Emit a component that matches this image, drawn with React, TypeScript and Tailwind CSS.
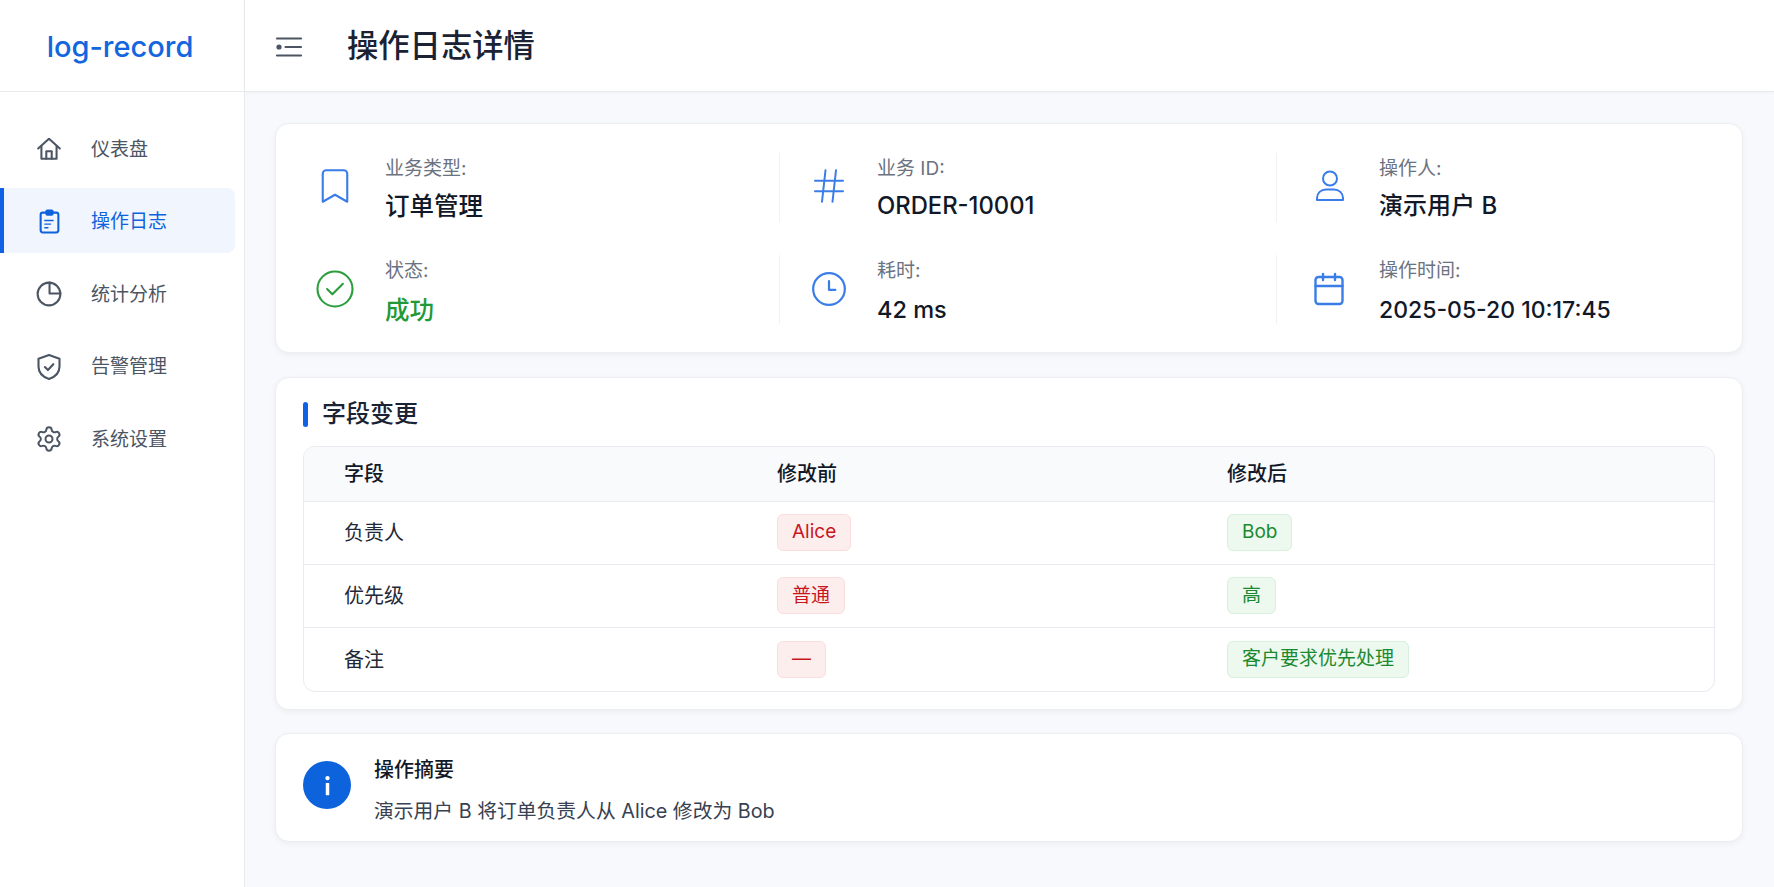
import { Bookmark, Hash, Calendar, Settings } from 'lucide-react';
import type { ReactNode } from 'react';

const FONT = "font-['Inter','Noto_Sans_CJK_SC',sans-serif]";

type IconProps = { className: string };

function HomeIcon({ className }: IconProps) {
  return (
    <svg className={className} viewBox="0 0 24 24" fill="none" stroke="currentColor" strokeWidth={1.9} strokeLinecap="round" strokeLinejoin="round">
      <path d="M2 11.500 12 2.500l10 9" />
      <path d="M5 9.500V21h14V9.500" />
      <path d="M9.500 21v-7h5v7" />
    </svg>
  );
}

function LogIcon({ className }: IconProps) {
  return (
    <svg className={className} viewBox="0 0 24 24" fill="none" stroke="currentColor" strokeWidth={2} strokeLinecap="round" strokeLinejoin="round">
      <rect x="3.500" y="3.500" width="17" height="19" rx="2" />
      <rect x="9" y="1.500" width="6" height="4" rx="1" fill="currentColor" />
      <path d="M7.500 11h8M7.500 14.500h5.500M7.500 18h3" strokeWidth={1.3} />
    </svg>
  );
}

function PieIcon({ className }: IconProps) {
  return (
    <svg className={className} viewBox="0 0 24 24" fill="none" stroke="currentColor" strokeWidth={1.9} strokeLinecap="round" strokeLinejoin="round">
      <circle cx="12" cy="12" r="10.500" />
      <path d="M12.500 1.500v10h10" />
    </svg>
  );
}

function ShieldIcon({ className }: IconProps) {
  return (
    <svg className={className} viewBox="0 0 24 24" fill="none" stroke="currentColor" strokeWidth={1.8} strokeLinecap="round" strokeLinejoin="round">
      <path d="M12 1.800 21 5v6.500c0 5.200-3.600 8.900-9 10.700-5.400-1.800-9-5.500-9-10.700V5z" />
      <path d="m8.500 12 2.600 2.600 4.600-5" />
    </svg>
  );
}

function MenuIcon() {
  return (
    <svg className="h-[22px] w-[28px] text-[#4b5563]" viewBox="0 0 28 22" fill="none" stroke="currentColor" strokeWidth={2.2} strokeLinecap="round">
      <path d="M2 2.500h24" />
      <path d="M10.500 11H26" />
      <path d="M2 19.500h24" />
      <circle cx="4" cy="11" r="2.600" fill="currentColor" stroke="none" />
    </svg>
  );
}

function UserIcon({ className }: IconProps) {
  return (
    <svg className={className} viewBox="0 0 30 32" fill="none" stroke="currentColor" strokeWidth={2} strokeLinecap="round" strokeLinejoin="round">
      <circle cx="15" cy="8.500" r="7" />
      <path d="M2 30v-2c0-5 4-8.500 9-8.500h8c5 0 9 3.500 9 8.500v2z" />
    </svg>
  );
}

function CheckIcon({ className }: IconProps) {
  return (
    <svg className={className} viewBox="0 0 24 24" fill="none" stroke="currentColor" strokeWidth={1.2} strokeLinecap="round" strokeLinejoin="round">
      <circle cx="12" cy="12" r="10" />
      <path d="m7.500 12 3 3 6-6" />
    </svg>
  );
}

function ClockIcon({ className }: IconProps) {
  return (
    <svg className={className} viewBox="0 0 24 24" fill="none" stroke="currentColor" strokeWidth={1.4} strokeLinecap="round" strokeLinejoin="round">
      <circle cx="12" cy="12" r="10" />
      <path d="M12 7v5.500h4" />
    </svg>
  );
}

function NavItem({ icon, label, active }: { icon: ReactNode; label: string; active?: boolean }) {
  return (
    <div
      className={`flex h-[65px] w-[235px] items-center gap-[28px] rounded-r-lg border-l-4 pt-[3px] pl-[31px] text-[19px] ${
        active ? 'border-[#0f62e6] bg-[#f0f5fe] text-[#0f62dc]' : 'border-transparent text-[#4b5563]'
      }`}
    >
      <div className="flex h-[28px] w-[28px] shrink-0 items-center justify-center">{icon}</div>
      <span className="pt-[2px]">{label}</span>
    </div>
  );
}

function InfoCell({
  icon,
  label,
  value,
  textClass,
  iconClass,
  valueClass,
  divider,
}: {
  icon: ReactNode;
  label: string;
  value: string;
  textClass: string;
  iconClass: string;
  valueClass?: string;
  divider?: boolean;
}) {
  return (
    <div className={`flex h-[69px] items-center ${divider ? 'border-l border-[#f1f2f5]' : ''}`}>
      <div className={`flex shrink-0 justify-center ${iconClass}`}>{icon}</div>
      <div className={`flex flex-col ${textClass}`}>
        <div className="text-[19px] leading-[26px] text-[#6b7280]">{label}</div>
        <div className={`leading-[34px] font-medium ${valueClass ?? 'text-[24px] text-[#111827]'}`}>{value}</div>
      </div>
    </div>
  );
}

function Badge({ tone, children }: { tone: 'red' | 'green'; children: ReactNode }) {
  return (
    <span
      className={`inline-flex h-[37px] items-center rounded-md border px-[14px] text-[19px] ${
        tone === 'red' ? 'border-[#fbdcdc] bg-[#fdeeee] text-[#c8161d]' : 'border-[#d8f0dc] bg-[#edf8ef] text-[#1a8a2e]'
      }`}
    >
      {children}
    </span>
  );
}

const rows = [
  { field: '负责人', before: 'Alice', after: 'Bob' },
  { field: '优先级', before: '普通', after: '高' },
  { field: '备注', before: '—', after: '客户要求优先处理' },
];

export default function App() {
  const blueIcon = 'text-[#3b7de8]';
  const rowOne = 'gap-[7px] pt-[4px]';
  const rowTwo = 'gap-[9px] pt-[5px]';

  return (
    <div className={`${FONT} flex h-[887px] w-[1774px] overflow-hidden bg-[#f8f9fc] text-[#111827]`}>
      <aside className="flex w-[245px] shrink-0 flex-col border-r border-[#e8eaee] bg-white">
        <div className="flex h-[92px] items-center justify-center border-b border-[#e8eaee] pt-[3px] pr-[4px] text-[29px] font-medium text-[#1266e0]">
          log-record
        </div>
        <nav className="flex flex-col gap-[7.500px] pt-[23px]">
          <NavItem icon={<HomeIcon className="h-[26px] w-[26px]" />} label="仪表盘" />
          <NavItem active icon={<LogIcon className="h-[25px] w-[25px]" />} label="操作日志" />
          <NavItem icon={<PieIcon className="h-[26px] w-[26px]" />} label="统计分析" />
          <NavItem icon={<ShieldIcon className="h-[28px] w-[28px]" />} label="告警管理" />
          <NavItem icon={<Settings className="h-[28px] w-[28px]" strokeWidth={1.7} />} label="系统设置" />
        </nav>
      </aside>

      <div className="flex min-w-0 flex-1 flex-col">
        <header className="flex h-[92px] shrink-0 items-center gap-[44px] border-b border-[#e8eaee] bg-white pt-[2px] pl-[30px] shadow-[0_1px_3px_rgba(17,24,39,0.04)]">
          <MenuIcon />
          <h1 className="text-[31.300px] font-medium text-[#1a2233]">操作日志详情</h1>
        </header>

        <main className="flex flex-col pt-[31px] pr-[31px] pl-[30px]">
          <section className="grid grid-cols-[503px_497px_1fr] gap-y-[33px] rounded-[14px] border border-[#eceef2] bg-white pt-[29px] pb-[28px] shadow-[0_2px_6px_rgba(17,24,39,0.05)]">
            <InfoCell
              textClass={rowOne}
              iconClass="-mt-[3px] w-[109px] pl-[8px]"
              icon={<Bookmark className={`h-[42px] w-[42px] ${blueIcon}`} strokeWidth={1.2} />}
              label="业务类型:"
              value="订单管理"
              valueClass="text-[24.500px] text-[#111827]"
            />
            <InfoCell
              divider
              textClass={rowOne}
              iconClass="-mt-[3px] w-[97px]"
              icon={<Hash className={`h-[42px] w-[42px] ${blueIcon}`} strokeWidth={1.15} />}
              label="业务 ID:"
              value="ORDER-10001"
              valueClass="text-[23.800px] text-[#111827]"
            />
            <InfoCell
              divider
              textClass={rowOne}
              iconClass="-mt-[3px] w-[102px] pl-[3px]"
              icon={<UserIcon className={`h-8 w-[30px] ${blueIcon}`} />}
              label="操作人:"
              value="演示用户 B"
            />
            <InfoCell
              textClass={rowTwo}
              iconClass="-mt-[2px] w-[109px] pl-[8px]"
              icon={<CheckIcon className="h-[42px] w-[42px] text-[#2a9d3c]" />}
              label="状态:"
              value="成功"
              valueClass="text-[24.500px] text-[#1f9a36]"
            />
            <InfoCell
              divider
              textClass={rowTwo}
              iconClass="-mt-[2px] w-[97px]"
              icon={<ClockIcon className={`h-[38px] w-[38px] ${blueIcon}`} />}
              label="耗时:"
              value="42 ms"
              valueClass="text-[23.500px] text-[#111827]"
            />
            <InfoCell
              divider
              textClass={rowTwo}
              iconClass="-mt-[2px] w-[102px] pl-[1px]"
              icon={<Calendar className={`h-[36px] w-[36px] ${blueIcon}`} strokeWidth={1.6} />}
              label="操作时间:"
              value="2025-05-20 10:17:45"
              valueClass="text-[23px] text-[#111827]"
            />
          </section>

          <section className="mt-[24px] rounded-[14px] border border-[#eceef2] bg-white px-[27px] pt-[23px] pb-[17px] shadow-[0_2px_6px_rgba(17,24,39,0.05)]">
            <div className="flex h-[26px] items-center gap-[14px]">
              <div className="h-[25px] w-[5px] rounded-full bg-[#0f62e6]" />
              <h2 className="text-[24px] font-medium text-[#1a2233]">字段变更</h2>
            </div>
            <div className="mt-[19px] overflow-hidden rounded-xl border border-[#e8eaf0]">
              <div className="grid h-[54.500px] grid-cols-[433px_450px_1fr] items-center border-b border-[#e8eaf0] bg-[#f9fafc] pl-[40px] text-[20px] font-medium">
                <div>字段</div>
                <div>修改前</div>
                <div>修改后</div>
              </div>
              {rows.map((row, i) => (
                <div
                  key={row.field}
                  className={`grid h-[63.300px] grid-cols-[433px_450px_1fr] items-center pl-[40px] text-[20px] text-[#1f2937] ${
                    i < rows.length - 1 ? 'border-b border-[#e8eaf0]' : ''
                  }`}
                >
                  <div>{row.field}</div>
                  <div>
                    <Badge tone="red">{row.before}</Badge>
                  </div>
                  <div>
                    <Badge tone="green">{row.after}</Badge>
                  </div>
                </div>
              ))}
            </div>
          </section>

          <section className="mt-[23px] flex h-[109px] items-start gap-[23px] rounded-[14px] border border-[#eceef2] bg-white pl-[27px] shadow-[0_2px_6px_rgba(17,24,39,0.05)]">
            <div className="mt-[27px] flex h-[48px] w-[48px] items-center justify-center rounded-full bg-[#0d63dc]">
              <svg className="h-[21px] w-[7px] text-white" viewBox="0 0 8 24" fill="currentColor">
                <circle cx="4" cy="3.500" r="2.500" />
                <rect x="2" y="9" width="4" height="14" rx="0.5" />
              </svg>
            </div>
            <div className="mt-[22px] flex flex-col gap-[14px]">
              <div className="text-[20px] leading-[28px] font-medium">操作摘要</div>
              <div className="text-[19.800px] leading-[26px] text-[#374151]">演示用户 B 将订单负责人从 Alice 修改为 Bob</div>
            </div>
          </section>
        </main>
      </div>
    </div>
  );
}
